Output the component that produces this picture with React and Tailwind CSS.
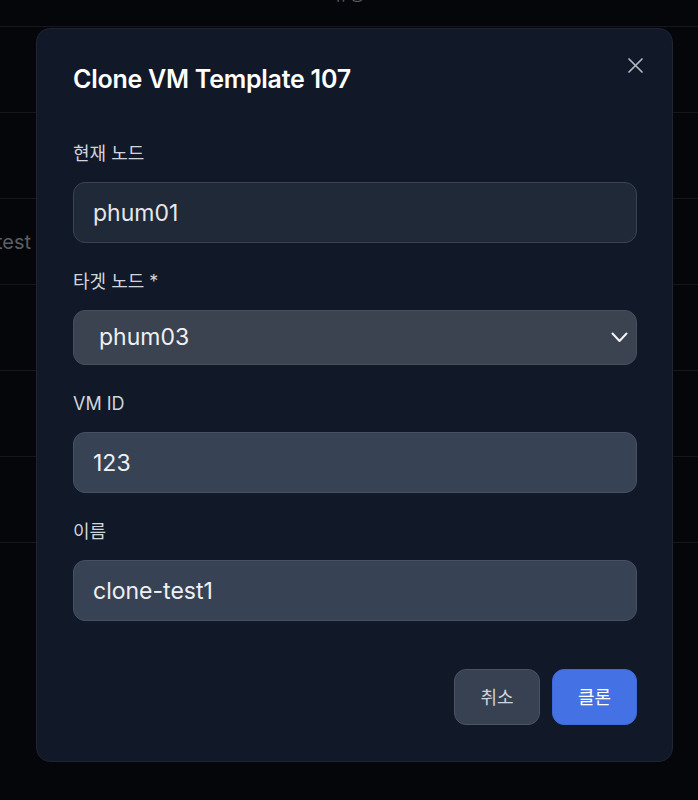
import { useState } from "react";

const font = { fontFamily: '"Inter", "Noto Sans CJK KR", sans-serif' };

function BackdropRows() {
    const rows = [0, 1, 2, 3, 4, 5];
    return (
        <div className="flex flex-col">
            <div className="h-[27px] border-b border-[#15171c] flex items-start overflow-hidden">
                <span className="ml-[333px] -mt-[18px] text-[17px] leading-6 text-[#55585f]">유형</span>
                <span className="ml-[212px] -mt-[20px] text-[17px] leading-6 text-[#55585f]">클론</span>
            </div>
            {rows.map((i) => (
                <div key={i} className="h-[86px] border-b border-[#15171c] flex items-center">
                    {i === 2 && (
                        <div className="w-[31px] overflow-hidden flex justify-end">
                            <span className="whitespace-nowrap text-[20px] text-[#5b5e64]">clone-test</span>
                        </div>
                    )}
                </div>
            ))}
        </div>
    );
}

function Label({ children }) {
    return <label className="block text-[18px] leading-6 text-[#d1d5db] mb-4">{children}</label>;
}

export default function App() {
    const [target] = useState("phum03");

    return (
        <div className="relative min-h-[800px] bg-[#050609] overflow-hidden" style={font}>
            <BackdropRows />

            <div className="absolute inset-0 flex justify-start items-start pt-[28px] pl-[36px]">
                <div className="relative w-[637px] rounded-[14px] border border-[#1e2433] bg-[#111827] pt-9 pb-9 pl-9 pr-[35px]">
                    <button className="absolute top-[29px] right-[29px] w-[15px] h-[15px] text-[#b4b8c0]">
                        <svg viewBox="0 0 15 15" width="15" height="15" fill="none" stroke="currentColor" strokeWidth="1.7" strokeLinecap="round">
                            <path d="M1 1L14 14M14 1L1 14" />
                        </svg>
                    </button>

                    <h2 className="text-[25px] leading-7 font-semibold text-white tracking-[-0.01em] mb-[49px]">
                        Clone VM Template 107
                    </h2>

                    <div>
                        <Label>현재 노드</Label>
                        <input
                            readOnly
                            value="phum01"
                            className="w-full h-[61px] rounded-xl border border-[#3a4352] bg-[#1f2937] px-[19px] text-[23px] text-[#e5e7eb] outline-none"
                        />
                    </div>

                    <div className="mt-[27px]">
                        <Label>타겟 노드 *</Label>
                        <div className="flex items-center justify-between h-[55px] rounded-xl border border-[#474e5c] bg-[#3b4250] pl-[25px] pr-[8px] text-[23px] text-[#eef0f3]">
                            <span>{target}</span>
                            <svg width="17" height="11" viewBox="0 0 17 11" fill="none" stroke="#f3f4f6" strokeWidth="2" strokeLinecap="round" strokeLinejoin="round">
                                <path d="M1.5 1.5L8.5 9L15.5 1.5" />
                            </svg>
                        </div>
                    </div>

                    <div className="mt-[27px]">
                        <Label>VM ID</Label>
                        <input
                            defaultValue="123"
                            className="w-full h-[61px] rounded-xl border border-[#465061] bg-[#374254] px-[19px] text-[23px] text-[#eef0f3] outline-none"
                        />
                    </div>

                    <div className="mt-[27px]">
                        <Label>이름</Label>
                        <input
                            defaultValue="clone-test1"
                            className="w-full h-[61px] rounded-xl border border-[#465061] bg-[#374254] px-[19px] text-[23px] text-[#eef0f3] outline-none"
                        />
                    </div>

                    <div className="mt-12 flex justify-end gap-3">
                        <button className="w-[86px] h-[56px] rounded-xl border border-[#4b5463] bg-[#374151] text-[18px] text-[#d1d5db]">
                            취소
                        </button>
                        <button className="w-[85px] h-[56px] rounded-xl border border-[#3f68d6] bg-[#4472e5] text-[18px] text-white">
                            클론
                        </button>
                    </div>
                </div>
            </div>
        </div>
    );
}
